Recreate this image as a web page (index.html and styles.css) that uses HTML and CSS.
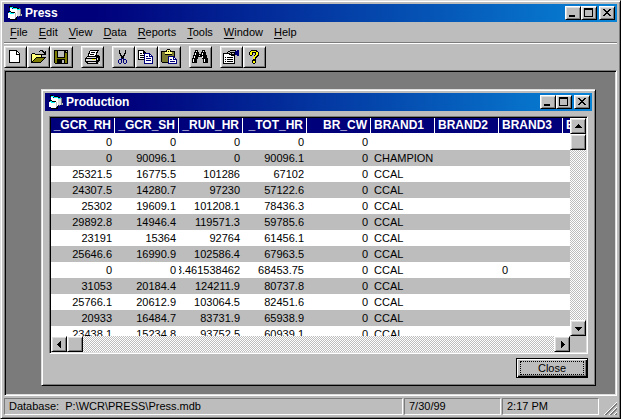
FILE: index.html
```
<!DOCTYPE html>
<html lang="en">
<head>
    <meta charset="UTF-8">
    <meta name="viewport" content="width=device-width, initial-scale=1.0">
    <title>Press</title>
    <link rel="stylesheet" href="styles.css">
</head>
<body>
    <svg width="0" height="0" class="defs">
        <symbol id="app-icon" viewBox="0 0 16 16">
            <path d="M10 3h2v1h1v5h1v2h-3v1h-1z" fill="#7b7b7b"/>
            <path d="M2 3h2v1h5v1h3v6H9v1H6V7H2z" fill="#fff"/>
            <path d="M9 5h3v6H9z" fill="#dedede"/>
            <path d="M1 1h3v1h5v1h2v1H6V3H1zM0 6h3v1h4v1H3V7H0z" fill="#000"/>
            <path d="M2 2h3v1h4v1H5V3H2zM9 4h3v1H9zM1 7h2v1h3v1H2V8H1z" fill="#00ffff"/>
            <path d="M0 8h2v1h5v5H2v-1H0z" fill="#fff"/>
            <path d="M7 8h1v5H7zM13 9h1v2h-1z" fill="#bdbdbd"/>
            <path d="M2 14h6v-2h1v3H2z" fill="#000"/>
        </symbol>
        <symbol id="minimize" viewBox="0 0 12 10"><path d="M2 7h6v2H2z"/></symbol>
        <symbol id="maximize" viewBox="0 0 12 10"><path fill-rule="evenodd" d="M1 0h9v9H1zM2 2v6h7V2z"/></symbol>
        <symbol id="close" viewBox="0 0 12 10"><path d="M2 1h2v1h1v1h2V2h1V1h2v1H9v1H8v1H7v1h1v1h1v1h1v1H8V7H7V6H5v1H4v1H2V7h1V6h1V5h1V4H4V3H3V2H2z"/></symbol>
    </svg>

    <div class="window app">
        <header class="title-bar">
            <svg class="title-icon"><use href="#app-icon"/></svg>
            <h1>Press</h1>
            <button class="caption-btn" aria-label="Minimize"><svg><use href="#minimize"/></svg></button>
            <button class="caption-btn" aria-label="Maximize"><svg><use href="#maximize"/></svg></button>
            <button class="caption-btn close-btn" aria-label="Close window"><svg><use href="#close"/></svg></button>
        </header>

        <nav class="menu">
            <button><u>F</u>ile</button>
            <button><u>E</u>dit</button>
            <button><u>V</u>iew</button>
            <button><u>D</u>ata</button>
            <button><u>R</u>eports</button>
            <button><u>T</u>ools</button>
            <button><u>W</u>indow</button>
            <button><u>H</u>elp</button>
        </nav>

        <div class="toolbar">
            <div class="group">
                <button aria-label="New">
                    <svg viewBox="0 0 16 16">
                        <path d="M1 1h8v1h1v1h1v1h1v10H1z"/>
                        <path d="M2 2h6v4h3v7H2z" fill="#fff"/>
                        <path d="M9 3h1v1h1v1H9z" fill="#fff"/>
                    </svg>
                </button>
                <button aria-label="Open">
                    <svg viewBox="0 0 16 16">
                        <path d="M9 1h3v1h1v1h1V2h1v4h-4V5h2V4h-1V3h-1V2H9v1H8V2h1z"/>
                        <path d="M0 5h1V4h3v1h7v3h4v1h-1v1h-1v1h-1v1h-1v1h-1v1H0z"/>
                        <path d="M1 5h3v1h6v2H5v1H4v1H3v1H2v1H1z" fill="#ffff7b"/>
                        <path d="M5 9h8v1h-1v1h-1v1h-1v1H2v-1h1v-1h1v-1h1z" fill="#7b7b00"/>
                    </svg>
                </button>
                <button aria-label="Save">
                    <svg viewBox="0 0 16 16">
                        <path d="M0 1h14v14H1v-1H0z"/>
                        <path d="M1 2h2v7h8V4h2v10h-2v-4H3v4H1z" fill="#7b7b00"/>
                        <path d="M4 2h6v6H4zM12 2h1v1h-1zM8 11h2v3H8z" fill="#bdbdbd"/>
                    </svg>
                </button>
            </div>
            <div class="group">
                <button aria-label="Print">
                    <svg viewBox="0 0 16 16">
                        <path d="M5 1h9v1h-1v2h-1v2h2v1h1v5h-1v1h-1v2H2v-1H1v-1H0V9h1V8h1V7h1V4h1V2h1z"/>
                        <path d="M5 2h7v1h-1v3h-1v1H4V5h1z" fill="#fff"/>
                        <path d="M6 3h4v1H6zM5 5h4v1H5z"/>
                        <path d="M2 8h9v1H2zM1 10h10v2H1zM12 9h1v2h-1zM3 13h8v1H3z" fill="#dedede"/>
                        <path d="M7 10h3v1H7z" fill="#ffff00"/>
                        <path d="M14 14h1v1h-1z" fill="#fff"/>
                    </svg>
                </button>
            </div>
            <div class="group">
                <button aria-label="Cut">
                    <svg viewBox="0 0 16 16">
                        <path d="M3 1h1v3h1v2h1v1h1V6h1V4h1V1h1v4H9v2H8v2H7v1H6V9H5V7H4V5H3z"/>
                        <path fill="#00007b" fill-rule="evenodd" d="M3 10h2V9h1v5H5v1H3v-1H2v-3h1zM3 11v3h2v-3zM7 9h1v1h2v1h1v3h-1v1H8v-1H7zM8 11v3h2v-3z"/>
                    </svg>
                </button>
                <button aria-label="Copy">
                    <svg viewBox="0 0 16 16">
                        <path d="M-1 1h6v1h1v1h1v1h1v7h-9z"/>
                        <path d="M0 2h4v3h3v5H0z" fill="#fff"/>
                        <path d="M1 4h2v1H1zM1 6h4v1H1zM1 8h4v1H1z"/>
                        <path d="M5 4h6v1h1v1h1v1h1v8H5z" fill="#00007b"/>
                        <path d="M6 5h4v3h3v6H6zM11 6h1v1h-1z" fill="#fff"/>
                        <path d="M7 7h2v1H7zM7 9h5v1H7zM7 11h5v1H7z" fill="#00007b"/>
                    </svg>
                </button>
                <button aria-label="Paste">
                    <svg viewBox="0 0 16 16">
                        <path d="M-1 2h5V1h1V0h3v1h1v1h4v12H0v-1h-1z"/>
                        <path d="M0 3h12v10H0z" fill="#7b7b31"/>
                        <path d="M3 3h7v2H3zM5 1h3v2H5z" fill="#ffff7b"/>
                        <path d="M6 2h1v1H6zM3 5h7v1H3z"/>
                        <path d="M6 7h6v1h1v1h1v1h1v5H6z" fill="#00007b"/>
                        <path d="M7 8h4v3h3v3H7zM12 9h1v1h-1z" fill="#fff"/>
                        <path d="M8 10h2v1H8zM8 12h5v1H8z" fill="#00007b"/>
                    </svg>
                </button>
            </div>
            <div class="group">
                <button aria-label="Find">
                    <svg viewBox="0 0 16 16">
                        <path d="M2 1h3v2h1v2h2V3h1V1h3v2h1v3h1v3h1v5h-5v-4H9V8H5v2H4v4h-5V9h1V6h1V3h1z"/>
                        <path d="M3 2h1v1H3zM2 4h1v2H2zM1 7h1v2H1zM0 10h1v3H0zM10 2h1v1h-1zM9 4h1v2H9zM9 7h1v2H9zM11 10h1v3h-1zM6 6h1v1H6z" fill="#fff"/>
                    </svg>
                </button>
            </div>
            <div class="group">
                <button aria-label="Properties">
                    <svg viewBox="0 0 16 16">
                        <path d="M-1 4h5v1h7v10H-1z"/>
                        <path d="M0 5h10v9H0z" fill="#fff"/>
                        <path d="M1 8h1v1H1zM3 8h6v1H3zM1 10h1v1H1zM3 10h6v1H3zM1 12h1v1H1zM3 12h6v1H3z"/>
                        <path d="M3 3h1V2h2V1h6v5h-2v1H7V6H5V5H3z"/>
                        <path d="M4 3h2v1H4zM6 2h5v1H6zM6 4h1v1H6zM8 4h2v1H8z" fill="#bdbdbd"/>
                        <path d="M11 2h2V1h2v6h-2V6h-2z" fill="#00007b"/>
                    </svg>
                </button>
                <button aria-label="Help">
                    <svg viewBox="0 0 16 16">
                        <path d="M4 1h6v1h1v1h1v4h-1v1h-1v1H9v5H8v1H6v-1H5v-3h1V8h1V6h1V4H6v2H5v1H3V6H2V3h1V2h1z"/>
                        <path d="M4 2h5v1h2v3h-1v1H9v1H8v2H6V8h1V7h1V6h1V3H5v3H3V3h1zM6 12h2v2H6z" fill="#ffff00"/>
                    </svg>
                </button>
            </div>
        </div>

        <main class="workspace">
            <section class="window child">
                <header class="title-bar">
                    <svg class="title-icon"><use href="#app-icon"/></svg>
                    <h2>Production</h2>
                    <button class="caption-btn" aria-label="Minimize"><svg><use href="#minimize"/></svg></button>
                    <button class="caption-btn" aria-label="Maximize"><svg><use href="#maximize"/></svg></button>
                    <button class="caption-btn close-btn" aria-label="Close window"><svg><use href="#close"/></svg></button>
                </header>

                <div class="grid-frame">
                    <div class="grid-view">
                        <table>
                            <thead>
                                <tr>
                                    <th class="num">_GCR_RH</th>
                                    <th class="num">_GCR_SH</th>
                                    <th class="num">_RUN_HR</th>
                                    <th class="num">_TOT_HR</th>
                                    <th class="num">BR_CW</th>
                                    <th>BRAND1</th>
                                    <th>BRAND2</th>
                                    <th>BRAND3</th>
                                    <th>BRAND4</th>
                                </tr>
                            </thead>
                            <tbody>
                                <tr><td>0</td><td>0</td><td>0</td><td>0</td><td>0</td><td></td><td></td><td></td><td></td></tr>
                                <tr><td>0</td><td>90096.1</td><td>0</td><td>90096.1</td><td>0</td><td>CHAMPION</td><td></td><td></td><td></td></tr>
                                <tr><td>25321.5</td><td>16775.5</td><td>101286</td><td>67102</td><td>0</td><td>CCAL</td><td></td><td></td><td></td></tr>
                                <tr><td>24307.5</td><td>14280.7</td><td>97230</td><td>57122.6</td><td>0</td><td>CCAL</td><td></td><td></td><td></td></tr>
                                <tr><td>25302</td><td>19609.1</td><td>101208.1</td><td>78436.3</td><td>0</td><td>CCAL</td><td></td><td></td><td></td></tr>
                                <tr><td>29892.8</td><td>14946.4</td><td>119571.3</td><td>59785.6</td><td>0</td><td>CCAL</td><td></td><td></td><td></td></tr>
                                <tr><td>23191</td><td>15364</td><td>92764</td><td>61456.1</td><td>0</td><td>CCAL</td><td></td><td></td><td></td></tr>
                                <tr><td>25646.6</td><td>16990.9</td><td>102586.4</td><td>67963.5</td><td>0</td><td>CCAL</td><td></td><td></td><td></td></tr>
                                <tr><td>0</td><td>0</td><td>8.461538462</td><td>68453.75</td><td>0</td><td>CCAL</td><td></td><td>0</td><td></td></tr>
                                <tr><td>31053</td><td>20184.4</td><td>124211.9</td><td>80737.8</td><td>0</td><td>CCAL</td><td></td><td></td><td></td></tr>
                                <tr><td>25766.1</td><td>20612.9</td><td>103064.5</td><td>82451.6</td><td>0</td><td>CCAL</td><td></td><td></td><td></td></tr>
                                <tr><td>20933</td><td>16484.7</td><td>83731.9</td><td>65938.9</td><td>0</td><td>CCAL</td><td></td><td></td><td></td></tr>
                                <tr><td>23438.1</td><td>15234.8</td><td>93752.5</td><td>60939.1</td><td>0</td><td>CCAL</td><td></td><td></td><td></td></tr>
                            </tbody>
                        </table>
                    </div>
                    <div class="scrollbar vertical">
                        <button aria-label="Scroll up"><svg viewBox="0 0 7 7"><path d="M3 1h1v1h1v1h1v1h1v1H0V4h1V3h1V2h1z"/></svg></button>
                        <div class="thumb"></div>
                        <button class="end" aria-label="Scroll down"><svg viewBox="0 0 7 7"><path d="M0 2h7v1H6v1H5v1H4v1H3V5H2V4H1V3H0z"/></svg></button>
                    </div>
                    <div class="scrollbar horizontal">
                        <button aria-label="Scroll left"><svg viewBox="0 0 7 7"><path d="M4 0h1v7H4V6H3V5H2V4H1V3h1V2h1V1h1z"/></svg></button>
                        <div class="thumb"></div>
                        <button class="end" aria-label="Scroll right"><svg viewBox="0 0 7 7"><path d="M2 0h1v1h1v1h1v1h1v1H5v1H4v1H3v1H2z"/></svg></button>
                    </div>
                </div>

                <div class="actions">
                    <button class="push-btn"><span>Close</span></button>
                </div>
            </section>
        </main>

        <footer class="status">
            <div class="panel path">Database:&nbsp; P:\WCR\PRESS\Press.mdb</div>
            <div class="panel">7/30/99</div>
            <div class="panel">2:17 PM</div>
            <svg class="grip" viewBox="0 0 14 14">
                <path d="M1 14L14 1M6 14l8-8M11 14l3-3" stroke="#fff"/>
                <path d="M2 14L14 2M3 14L14 3M7 14l7-7M8 14l6-6M12 14l2-2M13 14l1-1" stroke="#7b7b7b"/>
            </svg>
        </footer>
    </div>
</body>
</html>
```
FILE: styles.css
```
:root {
    --face: #bdbdbd;
    --light: #dedede;
    --shadow: #7b7b7b;
    --navy: #00007b;
}
* {
    box-sizing: border-box;
}
html, body {
    height: 100%;
}
body {
    margin: 0;
    font-family: "Liberation Sans", Arial, sans-serif;
    font-size: 11px;
    line-height: 14px;
    color: #000;
}
button {
    font: inherit;
    color: inherit;
    padding: 0;
    margin: 0;
    border: none;
    background: var(--face);
}
svg {
    display: block;
    overflow: visible;
    shape-rendering: crispEdges;
}
.defs {
    position: absolute;
}

/* windows */
.window {
    display: flex;
    flex-direction: column;
    background: var(--face);
    border: 1px solid;
    border-color: var(--light) #000 #000 var(--light);
    box-shadow: inset 1px 1px #fff, inset -1px -1px var(--shadow);
    padding: 3px;
}
.app {
    min-height: 100%;
}
.title-bar {
    display: flex;
    align-items: center;
    flex: none;
    height: 18px;
    padding: 0 2px 0 4px;
    background: linear-gradient(to right, var(--navy) 15%, #0884d6);
    color: #fff;
}
.title-icon {
    width: 16px;
    height: 16px;
}
.title-bar h1, .title-bar h2 {
    flex: 1;
    margin: 0;
    padding-left: 1px;
    font-size: 12px;
    font-weight: bold;
}
.caption-btn, .toolbar button, .scrollbar button, .thumb {
    border: 1px solid;
    border-color: #fff #000 #000 #fff;
    box-shadow: inset 1px 1px var(--light), inset -1px -1px var(--shadow);
    background: var(--face);
}
.caption-btn {
    width: 16px;
    height: 14px;
    padding: 1px;
}
.caption-btn svg {
    width: 12px;
    height: 10px;
}
.close-btn {
    margin-left: 2px;
}

/* menu and toolbar */
.menu {
    display: flex;
    flex: none;
    height: 21px;
    border-bottom: 1px solid var(--shadow);
}
.menu button {
    padding: 0 5px 0 6px;
}
.menu u {
    text-underline-offset: 2px;
}
.toolbar {
    display: flex;
    flex: none;
    gap: 8px;
    padding: 2px 0;
    border-top: 1px solid #fff;
}
.group {
    display: flex;
}
.toolbar button {
    width: 23px;
    height: 22px;
    padding: 2px 3px;
}
.toolbar svg {
    width: 16px;
    height: 16px;
}

/* workspace */
.workspace {
    display: flex;
    flex: 1;
    padding: 18px 20px 9px 36px;
    background: var(--shadow);
    border: 1px solid;
    border-color: var(--shadow) #fff #fff var(--shadow);
    box-shadow: inset 1px 1px #000, inset -1px -1px var(--light);
}
.child {
    flex: 1;
    min-width: 0;
}
.grid-frame {
    display: grid;
    flex: 1;
    grid-template-columns: 1fr 16px;
    grid-template-rows: 1fr 16px;
    margin: 5px 4px 0;
    border: 1px solid;
    border-color: var(--shadow) #fff #fff var(--shadow);
    box-shadow: inset 1px 1px #000, inset -1px -1px var(--light);
    padding: 1px;
}
.grid-view {
    min-width: 0;
    height: 218px;
    overflow: hidden;
    background: #fff;
}
table {
    width: 576px;
    table-layout: fixed;
    border-collapse: separate;
    border-spacing: 0;
}
th, td {
    height: 16px;
    padding: 0 3px;
    line-height: 15px;
    text-align: left;
    white-space: nowrap;
    overflow: hidden;
}
th {
    background: var(--navy);
    color: #fff;
    font-size: 12px;
    border-right: 1px solid #fff;
    border-bottom: 1px solid #fff;
}
th.num {
    padding: 0 3px 0 0;
    text-align: right;
}
/* long numbers lose their leading digits */
td:nth-child(-n+5) {
    direction: rtl;
    text-align: right;
    text-align: start;
}
tbody tr:nth-child(even) {
    background: var(--face);
}

/* scrollbars */
.scrollbar {
    display: flex;
    background: repeating-conic-gradient(#fff 0 25%, var(--face) 0 50%) 0 0 / 2px 2px;
}
.vertical {
    flex-direction: column;
}
.scrollbar button, .thumb {
    display: flex;
    align-items: center;
    justify-content: center;
    flex: none;
    width: 16px;
    height: 16px;
}
.scrollbar svg {
    width: 7px;
    height: 7px;
}
.vertical .end {
    margin-top: auto;
}
.horizontal .end {
    margin-left: auto;
}

.actions {
    display: flex;
    justify-content: flex-end;
    padding: 4px 4px 4px 0;
}
.push-btn {
    width: 72px;
    height: 20px;
    padding: 2px;
    border: 1px solid #000;
    box-shadow: inset 1px 1px #fff, inset -1px -1px #000, inset -2px -2px var(--shadow);
}
.push-btn span {
    display: block;
    margin: 0 1px;
    line-height: 12px;
    border: 1px dotted #000;
}

/* status bar */
.status {
    display: flex;
    flex: none;
    gap: 1px;
    padding-top: 2px;
}
.panel {
    width: 97px;
    height: 17px;
    padding-left: 4px;
    border: 1px solid;
    border-color: var(--shadow) #fff #fff var(--shadow);
}
.path {
    flex: 1;
}
.grip {
    width: 14px;
    height: 14px;
    margin: 3px 0 0 3px;
}
```
